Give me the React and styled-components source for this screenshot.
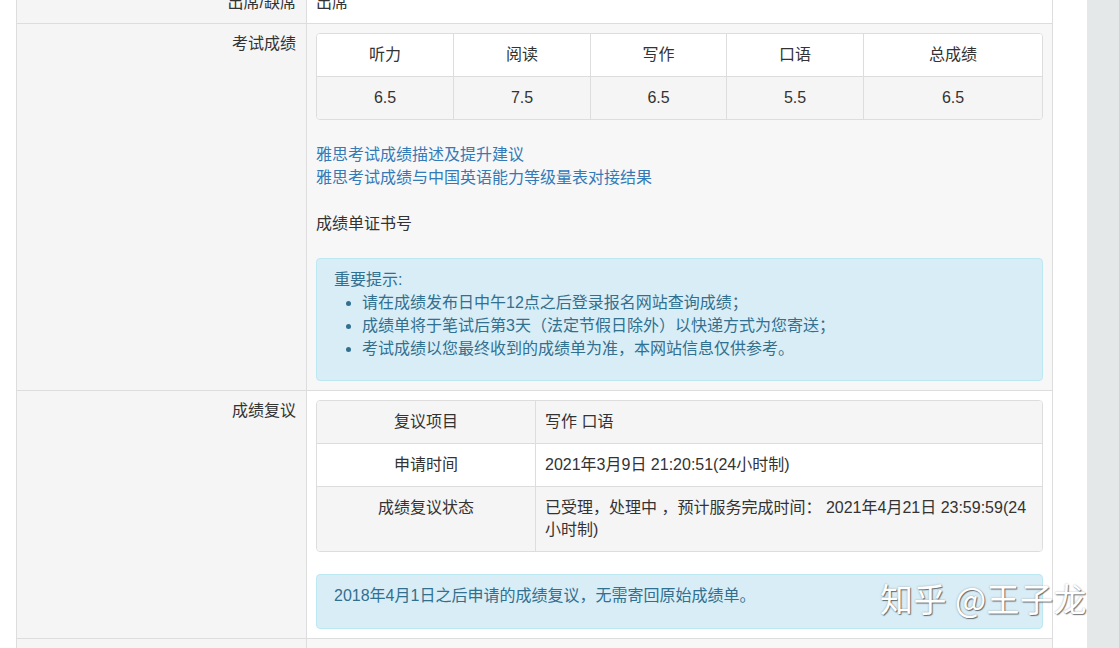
import React from 'react';
import styled, { createGlobalStyle } from 'styled-components';

const GlobalStyle = createGlobalStyle`
  html, body {
    margin: 0;
    padding: 0;
    background: #fff;
    overflow: hidden;
  }
  body {
    font-family: "Liberation Sans", "Noto Sans CJK SC", sans-serif;
    font-size: 16px;
    color: #333;
  }
`;

const Page = styled.div`
  position: relative;
  display: flex;
  height: 648px;
  overflow: hidden;
`;

const Content = styled.div`
  flex: 1;
  padding-left: 16px;
`;

const Scroller = styled.div`
  width: 32px;
  flex: none;
  background: #e4e8e8;
`;

const InfoTable = styled.div`
  width: 1037px;
  margin-top: -18px;
  border: 1px solid #ddd;
  border-bottom: none;
  box-sizing: border-box;
`;

const Row = styled.div`
  display: grid;
  grid-template-columns: 290px 1fr;
  border-top: ${p => (p.$first ? 'none' : '1px solid #ddd')};
  background: ${p => (p.$striped ? '#f7f7f7' : '#fff')};
  min-height: ${p => p.$minH || 0}px;
`;

const Label = styled.div`
  background: #f5f5f5;
  border-right: 1px solid #ddd;
  text-align: right;
  padding: 9px 10px;
  line-height: 22px;
  color: #333;
`;

const Cell = styled.div`
  padding: 9px 9px;
  line-height: 22px;
  color: #333;
`;

const Grid = styled.div`
  display: grid;
  grid-template-columns: ${p => p.$cols};
  border: 1px solid #ddd;
  border-radius: 4px;
  overflow: hidden;
  background: #fff;
`;

const GridCell = styled.div`
  padding: 10px 9px;
  line-height: 22px;
  text-align: ${p => (p.$center ? 'center' : 'left')};
  background: ${p => (p.$gray ? '#f5f5f5' : '#fff')};
  border-left: ${p => (p.$firstCol ? 'none' : '1px solid #ddd')};
  border-top: ${p => (p.$firstRow ? 'none' : '1px solid #ddd')};
  color: #333;
`;

const Links = styled.div`
  margin-top: 23px;
  line-height: 23px;
`;

const Link = styled.a`
  display: block;
  color: #337ab7;
  text-decoration: none;
`;

const Plain = styled.p`
  margin: 23px 0 0;
  line-height: 23px;
`;

const Alert = styled.div`
  margin-top: ${p => p.$mt}px;
  background: #d9edf7;
  border: 1px solid #bce8f1;
  border-radius: 4px;
  color: #31708f;
  padding: 9px 17px ${p => p.$pb || 20}px;
  line-height: 23px;
`;

const List = styled.ul`
  margin: 0;
  padding-left: 28px;
  list-style: disc;
`;

const Watermark = styled.div`
  position: absolute;
  left: 880px;
  top: 578px;
  font-family: "Noto Sans CJK SC", sans-serif;
  font-size: 33px;
  line-height: 40px;
  letter-spacing: 0.5px;
  color: #fff;
  text-shadow: 1px 1px 1px rgba(0, 0, 0, 0.5), 0 0 2px rgba(0, 0, 0, 0.3);
  white-space: nowrap;
`;

const scores = [
  ['听力', '6.5'],
  ['阅读', '7.5'],
  ['写作', '6.5'],
  ['口语', '5.5'],
  ['总成绩', '6.5'],
];

const review = [
  ['复议项目', '写作 口语'],
  ['申请时间', '2021年3月9日 21:20:51(24小时制)'],
  ['成绩复议状态', '已受理，处理中 ，预计服务完成时间： 2021年4月21日 23:59:59(24小时制)'],
];

const App = () => (
  <Page>
    <GlobalStyle />
    <Content>
      <InfoTable>
        <Row $first>
          <Label>出席/缺席</Label>
          <Cell>出席</Cell>
        </Row>
        <Row $striped>
          <Label>考试成绩</Label>
          <Cell>
            <Grid $cols="136px 137px 136px 137px 1fr">
              {scores.map(([name], i) => (
                <GridCell key={name} $center $firstRow $firstCol={i === 0}>
                  {name}
                </GridCell>
              ))}
              {scores.map(([name, v], i) => (
                <GridCell key={name + v} $center $gray $firstCol={i === 0}>
                  {v}
                </GridCell>
              ))}
            </Grid>
            <Links>
              <Link href="#">雅思考试成绩描述及提升建议</Link>
              <Link href="#">雅思考试成绩与中国英语能力等级量表对接结果</Link>
            </Links>
            <Plain>成绩单证书号</Plain>
            <Alert $mt={23}>
              重要提示:
              <List>
                <li>请在成绩发布日中午12点之后登录报名网站查询成绩；</li>
                <li>成绩单将于笔试后第3天（法定节假日除外）以快递方式为您寄送；</li>
                <li>考试成绩以您最终收到的成绩单为准，本网站信息仅供参考。</li>
              </List>
            </Alert>
          </Cell>
        </Row>
        <Row>
          <Label>成绩复议</Label>
          <Cell>
            <Grid $cols="218px 1fr">
              {review.map(([k, v], i) => (
                <React.Fragment key={k}>
                  <GridCell $center $firstCol $firstRow={i === 0} $gray={i !== 1}>
                    {k}
                  </GridCell>
                  <GridCell $firstRow={i === 0} $gray={i !== 1}>
                    {v}
                  </GridCell>
                </React.Fragment>
              ))}
            </Grid>
            <Alert $mt={22} $pb={21}>2018年4月1日之后申请的成绩复议，无需寄回原始成绩单。</Alert>
          </Cell>
        </Row>
        <Row $striped $minH={60}>
          <Label />
          <Cell />
        </Row>
      </InfoTable>
    </Content>
    <Scroller />
    <Watermark>知乎 @王子龙</Watermark>
  </Page>
);

export default App;
